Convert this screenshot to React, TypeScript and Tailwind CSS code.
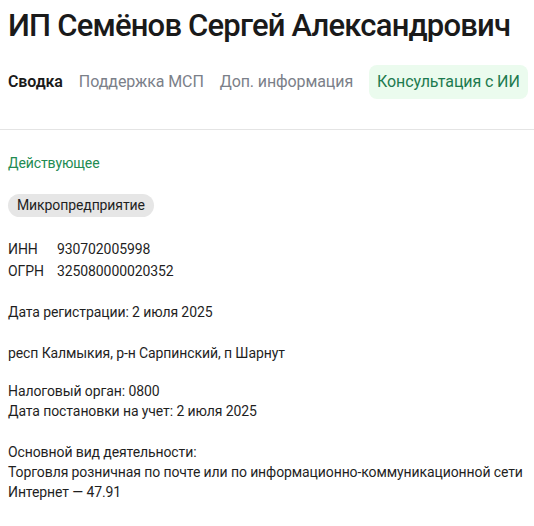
export default function App() {
  return (
    <div className="min-h-screen bg-white text-[#1f1f1f]" style={{ fontFamily: 'Roboto, "Noto Sans", sans-serif' }}>
      <div className="px-[8px] pt-[6px]">
        <h1 className="whitespace-nowrap text-[31px] leading-[40px] font-medium tracking-[-0.8px] text-[#1a1a1a]">
          ИП Семёнов Сергей Александрович
        </h1>
        <nav className="mt-[19px] flex items-center gap-[16px] whitespace-nowrap text-[16px] tracking-[-0.1px]">
          <span className="font-semibold text-[#1a1a1a]">Сводка</span>
          <span className="text-[#7b8089]">Поддержка МСП</span>
          <span className="text-[#7b8089]">Доп. информация</span>
          <span className="rounded-[8px] bg-[#ebfbee] px-[8px] py-[5px] text-[#1d7a4f]">Консультация с ИИ</span>
        </nav>
      </div>
      <div className="mt-[30px] border-t border-[#e4e4e4]" />
      <div className="px-[8px] pt-[23px] text-[14px] leading-[20px] tracking-[-0.1px]">
        <div className="text-[#228b52]">Действующее</div>
        <div className="mt-[21px]">
          <span className="inline-block rounded-full bg-[#e6e6e6] px-[9px] py-[2px] leading-[19px]">Микропредприятие</span>
        </div>
        <div className="mt-[21px] grid grid-cols-[49px_1fr] leading-[22px]">
          <span>ИНН</span>
          <span>930702005998</span>
          <span>ОГРН</span>
          <span>325080000020352</span>
        </div>
        <p className="mt-[20px]">Дата регистрации: 2 июля 2025</p>
        <p className="mt-[21px]">респ Калмыкия, р-н Сарпинский, п Шарнут</p>
        <div className="mt-[18px]">
          <p>Налоговый орган: 0800</p>
          <p>Дата постановки на учет: 2 июля 2025</p>
        </div>
        <div className="mt-[21px]">
          <p>Основной вид деятельности:</p>
          <p>Торговля розничная по почте или по информационно-коммуникационной сети Интернет — 47.91</p>
        </div>
      </div>
    </div>
  );
}
